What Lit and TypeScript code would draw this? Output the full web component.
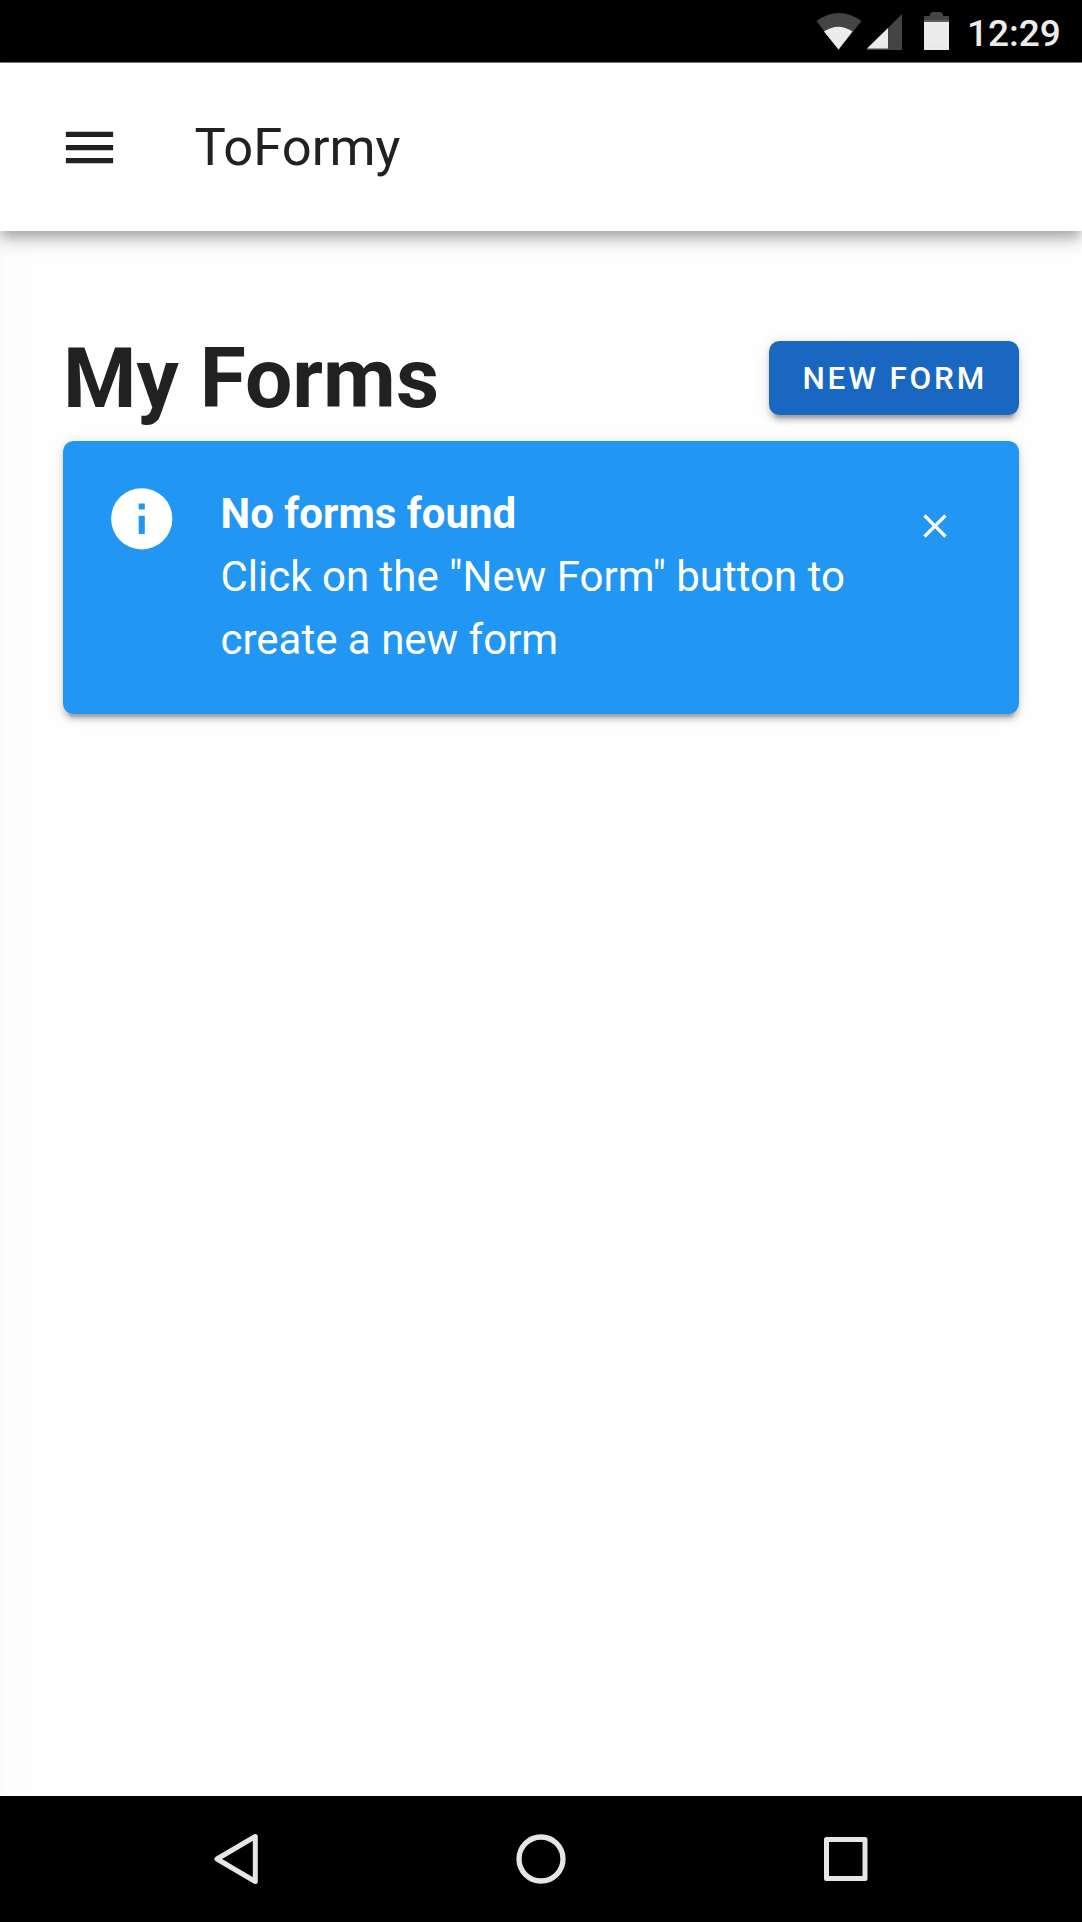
import { LitElement, html, css } from "lit";
import { customElement, property } from "lit/decorators.js";

@customElement("status-bar")
class StatusBar extends LitElement {
  static styles = css`
    :host {
      display: flex;
      align-items: center;
      justify-content: flex-end;
      height: 62px;
      background: #000;
      border-bottom: 1px solid #808080;
    }
    .icons {
      flex: none;
      display: block;
    }
    .clock {
      font-size: 37px;
      font-weight: 500;
      line-height: 62px;
      padding-top: 4px;
      color: #ececec;
      width: 115px;
      height: 60px;
      white-space: nowrap;
    }
  `;
  render() {
    return html`
      <svg class="icons" width="151" height="62" viewBox="816 0 151 62">
        <path fill="#444" d="M816.500 21Q838.500 5 861.500 21L838.500 50Z" />
        <path fill="#ececec" d="M824 31.500Q838.500 22 852.500 31.500L838.500 49.500Z" />
        <path fill="#444" d="M902 14V50H866Z" />
        <path fill="#ececec" d="M888 28V48.500H867Z" />
        <path fill="#444" d="M924 22V16H930V14L932 12H941L943 14V16H949V22Z" />
        <path fill="#606060" d="M924 20H949V22H924Z" />
        <path fill="#ececec" d="M924 22H949V50H924Z" />
      </svg>
      <span class="clock">12:29</span>
    `;
  }
}

@customElement("app-bar")
class AppBar extends LitElement {
  @property() heading = "";
  static styles = css`
    :host {
      display: flex;
      align-items: center;
      height: 168px;
      box-sizing: border-box;
      padding-left: 57.5px;
      background: #fff;
      position: relative;
      box-shadow: 0 5.3px 10.5px -2.6px rgba(0, 0, 0, 0.2),
        0 10.5px 13.2px 0 rgba(0, 0, 0, 0.14),
        0 2.6px 26.3px 0 rgba(0, 0, 0, 0.12);
    }
    .menu {
      flex: none;
      margin: 1px 74px 0 0;
    }
    .heading {
      font-size: 52.5px;
      line-height: 79px;
      color: #212121;
      white-space: nowrap;
    }
  `;
  render() {
    return html`
      <svg class="menu" width="63" height="63" viewBox="0 0 24 24" fill="#212121">
        <path d="M3,6H21V8H3V6M3,11H21V13H3V11M3,16H21V18H3V16Z" />
      </svg>
      <span class="heading">${this.heading}</span>
    `;
  }
}

@customElement("info-alert")
class InfoAlert extends LitElement {
  @property() heading = "";
  @property() message = "";
  static styles = css`
    :host {
      display: flex;
      align-items: flex-start;
      box-sizing: border-box;
      height: 273px;
      padding: 41px 42px;
      border-radius: 10.5px;
      background: #2196f3;
      color: #fff;
      box-shadow: 0 7.9px 2.6px -5.3px rgba(0, 0, 0, 0.2),
        0 5.3px 5.3px 0 rgba(0, 0, 0, 0.14),
        0 2.6px 13.2px 0 rgba(0, 0, 0, 0.12);
    }
    .info {
      flex: none;
      margin-right: 42px;
    }
    .text {
      flex: 1;
      font-size: 42px;
      line-height: 63.2px;
    }
    .title {
      font-weight: 700;
    }
    .close {
      flex: none;
      margin: 24px 21.800px 0 0;
    }
  `;
  render() {
    return html`
      <svg class="info" width="73.5" height="73.5" viewBox="0 0 24 24" fill="#fff">
        <path d="M13,9H11V7H13M13,17H11V11H13M12,2A10,10 0 0,0 2,12A10,10 0 0,0 12,22A10,10 0 0,0 22,12A10,10 0 0,0 12,2Z" />
      </svg>
      <div class="text">
        <div class="title">${this.heading}</div>
        <div>${this.message}</div>
      </div>
      <svg class="close" width="40" height="40" viewBox="0 0 24 24" fill="#fff">
        <path d="M19,6.41L17.59,5L12,10.59L6.41,5L5,6.41L10.59,12L5,17.59L6.41,19L12,13.41L17.59,19L19,17.59L13.41,12L19,6.41Z" />
      </svg>
    `;
  }
}

@customElement("nav-bar")
class NavBar extends LitElement {
  static styles = css`
    :host {
      display: flex;
      justify-content: center;
      align-items: center;
      gap: 245px;
      height: 126px;
      background: #000;
    }
    svg {
      display: block;
      fill: none;
      stroke: #e6e6e6;
      stroke-linejoin: round;
    }
  `;
  render() {
    return html`
      <svg width="60" height="60" viewBox="0 0 60 60" stroke-width="5">
        <path d="M49.300 7.500V52.500L11 30Z" />
      </svg>
      <svg width="60" height="60" viewBox="0 0 60 60" stroke-width="5.3">
        <circle cx="30" cy="30" r="22" />
      </svg>
      <svg width="60" height="60" viewBox="0 0 60 60" stroke-width="5">
        <rect x="10.500" y="10.600" width="38.500" height="39" />
      </svg>
    `;
  }
}

@customElement("app-root")
class AppRoot extends LitElement {
  static styles = css`
    :host {
      display: flex;
      flex-direction: column;
      height: 1922px;
      font-family: Roboto, sans-serif;
      background: #fff;
      overflow: hidden;
    }
    .content {
      flex: 1;
      padding: 105px 63.5px 0 63px;
      background: linear-gradient(90deg, #fafafa 0, #fdfdfd 10px, #fefefe 29px);
    }
    .top {
      display: flex;
      align-items: center;
      justify-content: space-between;
      height: 84px;
      margin-bottom: 21px;
    }
    .title {
      margin: 0;
      padding-top: 2px;
      font-size: 84px;
      font-weight: 700;
      line-height: 84px;
      color: #212121;
      white-space: nowrap;
    }
    .new {
      width: 249.5px;
      height: 73.5px;
      padding: 0 0 0 2px;
      border: 0;
      border-radius: 10.5px;
      background: #1967c0;
      color: #fff;
      font: 500 31.5px/73px Roboto, sans-serif;
      letter-spacing: 0.0892857em;
      white-space: nowrap;
      box-shadow: 0 7.9px 2.6px -5.3px rgba(0, 0, 0, 0.2),
        0 5.3px 5.3px 0 rgba(0, 0, 0, 0.14),
        0 2.6px 13.2px 0 rgba(0, 0, 0, 0.12);
    }
  `;
  render() {
    return html`
      <status-bar></status-bar>
      <app-bar heading="ToFormy"></app-bar>
      <main class="content">
        <div class="top">
          <h1 class="title">My Forms</h1>
          <button class="new">NEW FORM</button>
        </div>
        <info-alert
          heading="No forms found"
          message=${'Click on the "New Form" button to create a new form'}
        ></info-alert>
      </main>
      <nav-bar></nav-bar>
    `;
  }
}
